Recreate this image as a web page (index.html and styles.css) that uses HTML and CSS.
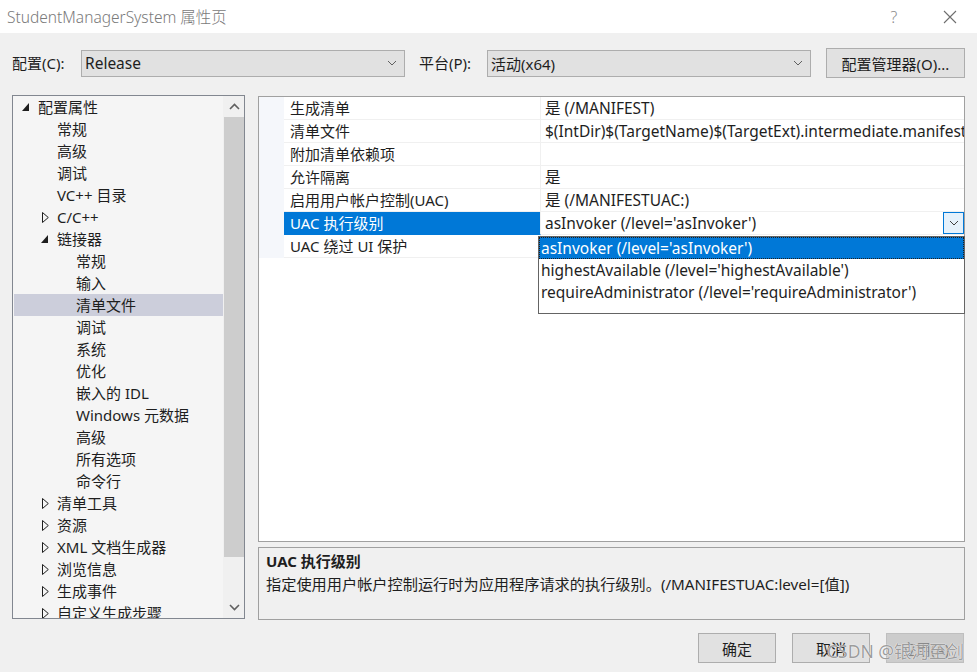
FILE: index.html
```html
<!DOCTYPE html>
<html>
<head>
<meta charset="utf-8">
<link rel="stylesheet" href="styles.css">
</head>
<body>
<div class="window">
  <div class="titlebar">
    <span class="title">StudentManagerSystem 属性页</span>
    <span class="tb-help">?</span>
    <span class="tb-close"><svg width="14" height="14" viewBox="0 0 14 14"><path d="M1 1L13 13M13 1L1 13" stroke="#6e6e6e" stroke-width="1.1" fill="none"/></svg></span>
  </div>

  <div class="config-row">
    <span class="lbl">配置(C):</span>
    <div class="select sel-config"><span class="latin">Release</span><svg class="chev" width="10" height="6" viewBox="0 0 10 6"><path d="M1 1L5 5L9 1" stroke="#606060" fill="none"/></svg></div>
    <span class="lbl lbl-plat">平台(P):</span>
    <div class="select sel-plat"><span>活动(x64)</span><svg class="chev" width="10" height="6" viewBox="0 0 10 6"><path d="M1 1L5 5L9 1" stroke="#606060" fill="none"/></svg></div>
    <div class="btn btn-mgr">配置管理器(O)...</div>
  </div>

  <div class="main">
    <div class="tree">
      <div class="tree-list">
        <div class="node l0"><svg class="exp" width="8" height="9" viewBox="0 0 8 9"><polygon points="7,0 7,8 0,8" fill="#1e1e1e"/></svg><span>配置属性</span></div>
        <div class="node l1"><span>常规</span></div>
        <div class="node l1"><span>高级</span></div>
        <div class="node l1"><span>调试</span></div>
        <div class="node l1"><span>VC++ 目录</span></div>
        <div class="node l1 has"><svg class="col" width="7" height="11" viewBox="0 0 7 11"><polygon points="0.5,0.5 6.3,5.5 0.5,10.5" fill="none" stroke="#1e1e1e"/></svg><span>C/C++</span></div>
        <div class="node l1 has"><svg class="exp" width="8" height="9" viewBox="0 0 8 9"><polygon points="7,0 7,8 0,8" fill="#1e1e1e"/></svg><span>链接器</span></div>
        <div class="node l2"><span>常规</span></div>
        <div class="node l2"><span>输入</span></div>
        <div class="node l2 selected"><span>清单文件</span></div>
        <div class="node l2"><span>调试</span></div>
        <div class="node l2"><span>系统</span></div>
        <div class="node l2"><span>优化</span></div>
        <div class="node l2"><span>嵌入的 IDL</span></div>
        <div class="node l2"><span>Windows 元数据</span></div>
        <div class="node l2"><span>高级</span></div>
        <div class="node l2"><span>所有选项</span></div>
        <div class="node l2"><span>命令行</span></div>
        <div class="node l1 has"><svg class="col" width="7" height="11" viewBox="0 0 7 11"><polygon points="0.5,0.5 6.3,5.5 0.5,10.5" fill="none" stroke="#1e1e1e"/></svg><span>清单工具</span></div>
        <div class="node l1 has"><svg class="col" width="7" height="11" viewBox="0 0 7 11"><polygon points="0.5,0.5 6.3,5.5 0.5,10.5" fill="none" stroke="#1e1e1e"/></svg><span>资源</span></div>
        <div class="node l1 has"><svg class="col" width="7" height="11" viewBox="0 0 7 11"><polygon points="0.5,0.5 6.3,5.5 0.5,10.5" fill="none" stroke="#1e1e1e"/></svg><span>XML 文档生成器</span></div>
        <div class="node l1 has"><svg class="col" width="7" height="11" viewBox="0 0 7 11"><polygon points="0.5,0.5 6.3,5.5 0.5,10.5" fill="none" stroke="#1e1e1e"/></svg><span>浏览信息</span></div>
        <div class="node l1 has"><svg class="col" width="7" height="11" viewBox="0 0 7 11"><polygon points="0.5,0.5 6.3,5.5 0.5,10.5" fill="none" stroke="#1e1e1e"/></svg><span>生成事件</span></div>
        <div class="node l1 has"><svg class="col" width="7" height="11" viewBox="0 0 7 11"><polygon points="0.5,0.5 6.3,5.5 0.5,10.5" fill="none" stroke="#1e1e1e"/></svg><span>自定义生成步骤</span></div>
      </div>
      <div class="vscroll">
        <div class="sb-arrow"><svg width="11" height="7" viewBox="0 0 11 7"><path d="M1 6L5.5 1.5L10 6" stroke="#606060" stroke-width="1.6" fill="none"/></svg></div>
        <div class="sb-thumb"></div>
        <div class="sb-rest"></div>
        <div class="sb-arrow"><svg width="11" height="7" viewBox="0 0 11 7"><path d="M1 1L5.5 5.5L10 1" stroke="#606060" stroke-width="1.6" fill="none"/></svg></div>
      </div>
    </div>

    <div class="right">
      <div class="grid">
        <div class="row"><div class="gut"></div><div class="name">生成清单</div><div class="val">是 (/MANIFEST)</div></div>
        <div class="row"><div class="gut"></div><div class="name">清单文件</div><div class="val">$(IntDir)$(TargetName)$(TargetExt).intermediate.manifest</div></div>
        <div class="row"><div class="gut"></div><div class="name">附加清单依赖项</div><div class="val"></div></div>
        <div class="row"><div class="gut"></div><div class="name">允许隔离</div><div class="val">是</div></div>
        <div class="row"><div class="gut"></div><div class="name">启用用户帐户控制(UAC)</div><div class="val">是 (/MANIFESTUAC:)</div></div>
        <div class="row sel"><div class="gut"></div><div class="name">UAC 执行级别</div><div class="val"><span>asInvoker (/level='asInvoker')</span><div class="dd-btn"><svg width="10" height="6" viewBox="0 0 10 6"><path d="M1 1L5 5L9 1" stroke="#404040" fill="none"/></svg></div></div></div>
        <div class="row"><div class="gut"></div><div class="name">UAC 绕过 UI 保护</div><div class="val"></div></div>

        <div class="dropdown">
          <div class="opt active">asInvoker (/level='asInvoker')</div>
          <div class="opt">highestAvailable (/level='highestAvailable')</div>
          <div class="opt">requireAdministrator (/level='requireAdministrator')</div>
        </div>
      </div>
      <div class="desc">
        <div class="desc-title">UAC 执行级别</div>
        <div class="desc-text">指定使用用户帐户控制运行时为应用程序请求的执行级别。(/MANIFESTUAC:level=[值])</div>
      </div>
    </div>
  </div>

  <div class="buttons">
    <div class="btn bottom-btn">确定</div>
    <div class="btn bottom-btn">取消</div>
    <div class="btn bottom-btn disabled">应用(A)</div>
    <span class="watermark">CSDN @银河至剑</span>
  </div>
</div>
</body>
</html>
```

FILE: styles.css
```css
html, body {
  margin: 0;
  padding: 0;
}
body {
  width: 977px;
  height: 672px;
  overflow: hidden;
  background: #f0f0f0;
  font-family: "Noto Sans", "Noto Sans CJK SC", sans-serif;
  font-size: 15px;
  color: #1e1e1e;
}
.window {
  position: relative;
  width: 977px;
  height: 672px;
}
.titlebar {
  height: 33px;
  background: #ffffff;
  display: flex;
  align-items: center;
  padding-left: 7px;
  box-sizing: border-box;
}
.title {
  color: #7a7a7a;
  font-size: 15.5px;
  font-weight: 300;
  flex: 1;
  margin-top: -1px;
}
.tb-help {
  color: #8a8a8a;
  font-size: 16px;
  font-weight: 300;
  width: 20px;
  text-align: center;
  margin-right: 39px;
}
.tb-close {
  width: 14px;
  height: 14px;
  margin-right: 20px;
  display: flex;
}
.config-row {
  display: flex;
  align-items: center;
  height: 30px;
  margin-top: 15px;
  padding-left: 12px;
}
.lbl {
  width: 69px;
  line-height: 27px;
}
.lbl-plat {
  width: 68px;
  margin-left: 14px;
}
.latin { font-size: 15.5px; }
.select {
  height: 27px;
  box-sizing: border-box;
  border: 1px solid #adadad;
  background: #e1e1e1;
  display: flex;
  align-items: center;
  padding-left: 3px;
  padding-right: 7px;
  justify-content: space-between;
}
.sel-config { width: 324px; }
.sel-plat { width: 324px; }
.btn {
  box-sizing: border-box;
  border: 1px solid #adadad;
  background: #e1e1e1;
  display: flex;
  align-items: center;
  justify-content: center;
}
.btn-mgr {
  width: 139px;
  height: 30px;
  margin-left: 15px;
}
.main {
  display: flex;
  margin-top: 17px;
  padding-left: 12px;
  height: 525px;
}
.tree {
  width: 233px;
  height: 524px;
  box-sizing: border-box;
  border: 1px solid #828790;
  background: #f5f5f5;
  display: flex;
  overflow: hidden;
}
.tree-list {
  flex: 1;
  padding-left: 1px;
  overflow: hidden;
}
.node {
  height: 22px;
  display: flex;
  align-items: center;
  white-space: nowrap;
  position: relative;
}
.node span { line-height: 22px; }
.l0 { padding-left: 24px; }
.l1 { padding-left: 43px; }
.l2 { padding-left: 62px; }
.l0 .exp { position: absolute; left: 8px; top: 7px; }
.l1 .exp { position: absolute; left: 27px; top: 7px; }
.l1 .col { position: absolute; left: 28px; top: 6px; }
.node.selected { background: #cccedb; }
.vscroll {
  width: 20px;
  background: #f0f0f0;
  display: flex;
  flex-direction: column;
  border-left: 1px solid #f0f0f0;
}
.sb-arrow {
  height: 21px;
  display: flex;
  align-items: center;
  justify-content: center;
}
.sb-thumb {
  height: 440px;
  background: #cdcdcd;
}
.sb-rest { flex: 1; }
.right {
  margin-left: 13px;
  width: 707px;
  display: flex;
  flex-direction: column;
  padding-top: 1px;
}
.grid {
  position: relative;
  height: 446px;
  box-sizing: border-box;
  border: 1px solid #a0a0a0;
  background: #ffffff;
}
.row {
  display: flex;
  height: 23px;
  box-sizing: border-box;
}
.gut {
  width: 25px;
  background: #f5f7fb;
  flex: none;
}
.name {
  width: 257px;
  flex: none;
  box-sizing: border-box;
  padding-left: 6px;
  border-right: 1px solid #f0f0f0;
  border-bottom: 1px solid #f0f0f0;
  line-height: 23px;
  white-space: nowrap;
}
.val {
  flex: 1;
  min-width: 0;
  padding-left: 4px;
  border-bottom: 1px solid #f0f0f0;
  line-height: 23px;
  font-size: 15.5px;
  white-space: nowrap;
  overflow: hidden;
  display: flex;
  align-items: center;
  justify-content: space-between;
}
.row.sel .name {
  background: #0078d7;
  color: #ffffff;
  border-bottom-color: #0078d7;
}
.dd-btn {
  width: 21px;
  height: 22px;
  box-sizing: border-box;
  border: 1px solid #0078d7;
  background: #e5f1fb;
  display: flex;
  align-items: center;
  justify-content: center;
  flex: none;
}
.dropdown {
  position: absolute;
  left: 279px;
  top: 139px;
  width: 427px;
  height: 78px;
  box-sizing: border-box;
  border: 1px solid #646464;
  background: #ffffff;
  font-size: 15.5px;
}
.opt {
  height: 22px;
  line-height: 22px;
  padding-left: 2px;
  white-space: nowrap;
}
.opt.active {
  background: #0078d7;
  color: #ffffff;
  outline: 1px dotted #1e1e1e;
  outline-offset: -1px;
}
.desc {
  margin-top: 5px;
  height: 73px;
  box-sizing: border-box;
  border: 1px solid #a0a0a0;
  background: #f0f0f0;
  padding: 2px 7px;
}
.desc-title {
  font-weight: bold;
  line-height: 22px;
}
.desc-text {
  line-height: 24px;
  white-space: nowrap;
  font-size: 15.2px;
}
.buttons {
  position: relative;
  display: flex;
  justify-content: flex-end;
  gap: 16px;
  padding-right: 13px;
  margin-top: 13px;
}
.bottom-btn {
  width: 78px;
  height: 30px;
}
.bottom-btn.disabled {
  background: #cccccc;
  border-color: #bfbfbf;
  color: #838383;
}
.watermark {
  position: absolute;
  left: 827px;
  top: 5px;
  z-index: 2;
  font-size: 17.5px;
  color: #9c9c9c;
  text-shadow: 0 0 1px #ffffff, 0 0 1px #ffffff;
  white-space: nowrap;
  pointer-events: none;
}
```
